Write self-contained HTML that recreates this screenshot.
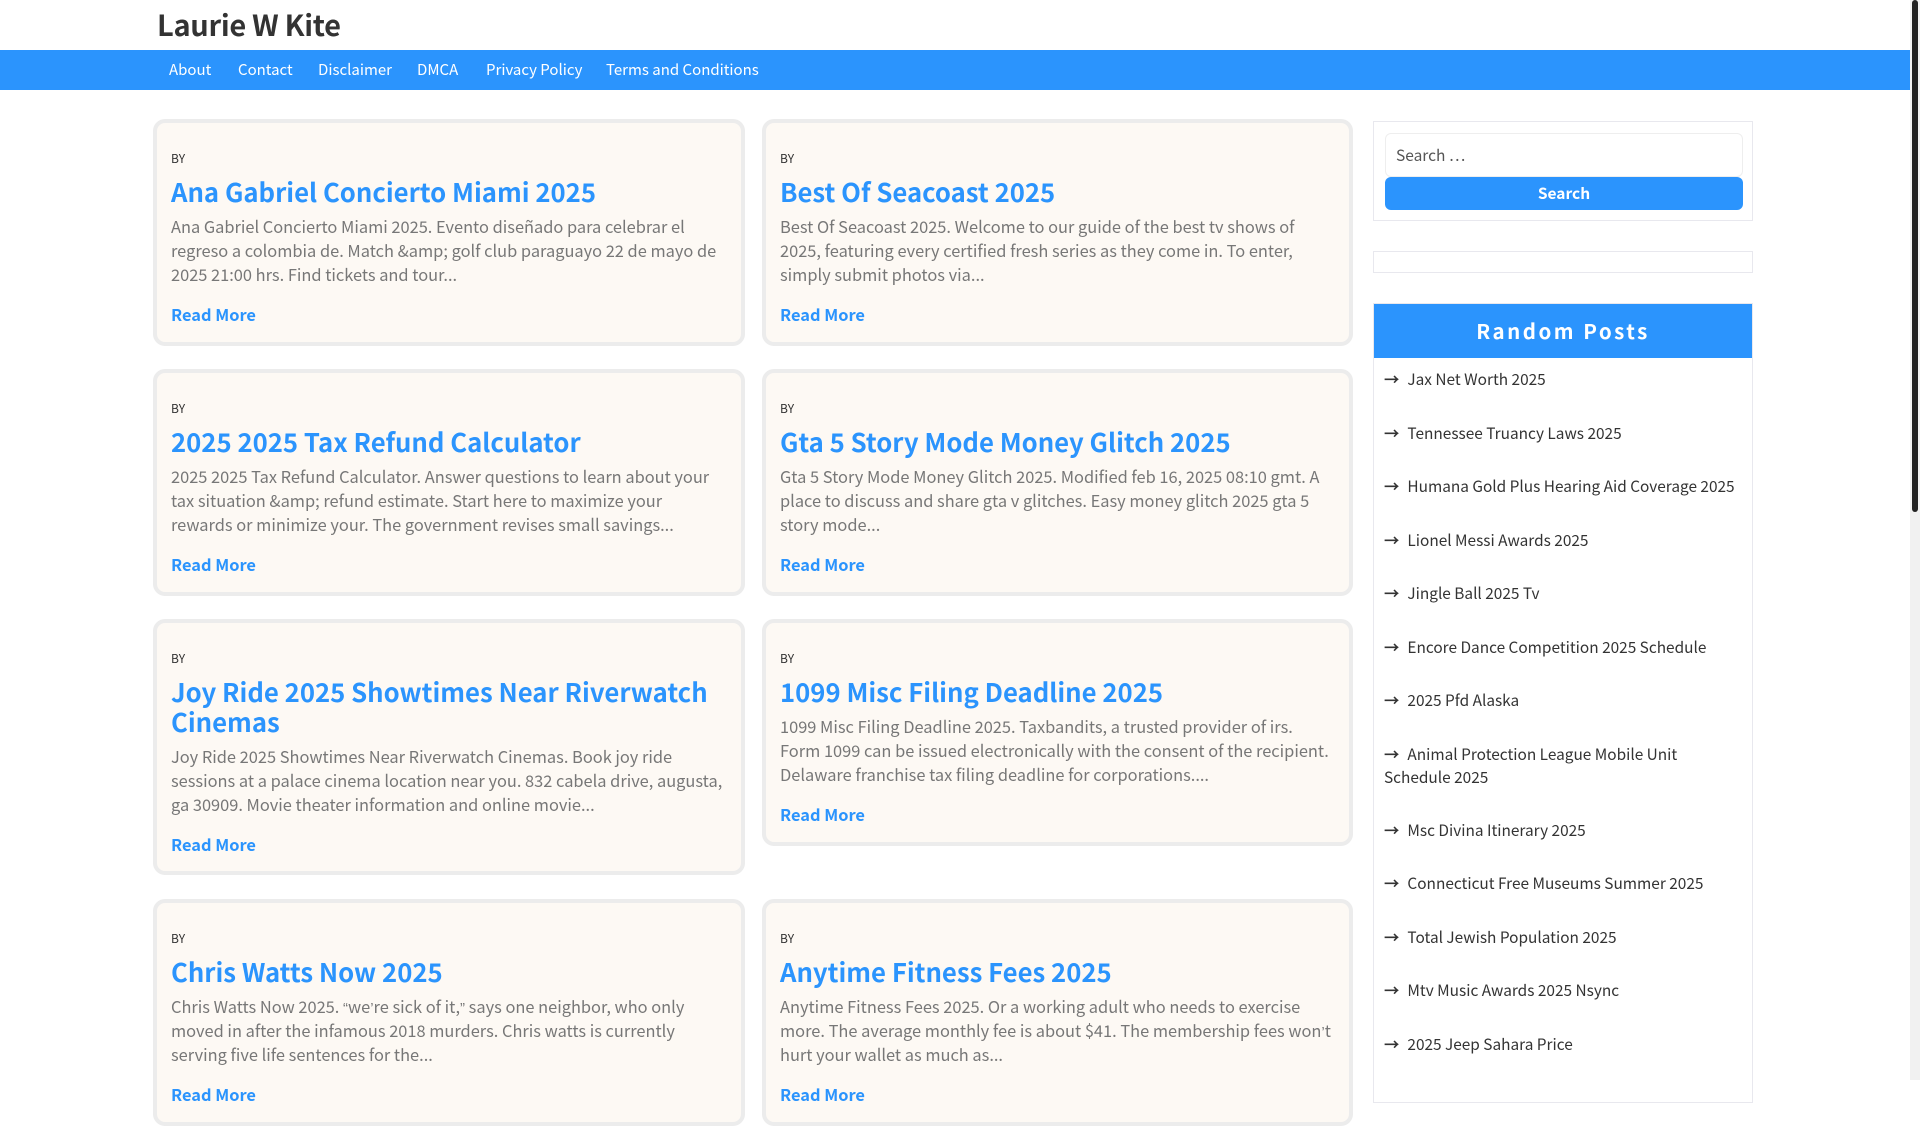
<!DOCTYPE html>
<html><head><meta charset="utf-8"><style>
*{box-sizing:border-box;margin:0;padding:0}
body{width:1920px;height:1080px;overflow:hidden;background:#fff;font-family:"Noto Sans CJK SC","Liberation Sans",sans-serif;position:relative}
.q{font-family:"Liberation Sans",sans-serif;line-height:0;font-size:15px}
.title{position:absolute;left:157px;top:4px;font-size:29px;font-weight:bold;color:#333;line-height:40px;letter-spacing:-0.3px}
.nav{position:absolute;left:0;top:50px;width:1910px;height:40px;background:#2b94fd}
.nav a{position:absolute;top:0;line-height:40px;color:#fff;font-size:15px;text-decoration:none}
.sb{position:absolute;right:0;top:0;width:10px;height:1080px;background:#f1f1f1}
.sb div{width:6px;margin-left:2px;height:512px;background:#222;border-radius:3px}
.card{position:absolute;background:#fdf9f4;border:4px solid #ececec;border-radius:12px;padding:0 14px}
.card .by{position:absolute;left:14px;top:27px;font-size:12px;color:#333}
.card h2{margin-top:54px;font-size:25.7px;line-height:30px;font-weight:600;color:#2b94fd}
.card p{margin-top:7px;font-size:16.4px;line-height:24px;color:#777}
.card .rm{display:block;margin-top:16px;font-size:16.4px;font-weight:bold;color:#2b94fd}
.box{position:absolute;left:1373px;width:380px;border:1px solid #e8e8ee;background:#fff}
.input{position:absolute;left:11px;top:11px;width:358px;height:44px;border:1px solid #eee;border-radius:6px;font-size:15.5px;color:#555;padding:11px 10px;line-height:20px}
.btn{position:absolute;left:11px;top:55px;width:358px;height:33px;background:#2b94fd;border-radius:6px;color:#fff;text-align:center;font-weight:bold;font-size:15.5px;line-height:33px}
.rp{position:absolute;left:1373px;top:303px;width:380px;height:800px;border:1px solid #e8e8ee}
.rp h3{height:54px;background:#2b94fd;color:#fff;text-align:center;font-size:20.5px;line-height:52px;letter-spacing:2.5px;font-weight:bold}
.rp li{position:absolute;left:10px;list-style:none;font-size:15.4px;color:#333;line-height:23px;width:360px}
.rp li:before{content:"\2192";font-weight:bold;margin-right:8px}
</style></head><body>
<div class="title">Laurie W Kite</div>
<div class="nav">
<a style="left:169px">About</a><a style="left:238px">Contact</a><a style="left:318px">Disclaimer</a><a style="left:417px">DMCA</a><a style="left:486px">Privacy Policy</a><a style="left:606px">Terms and Conditions</a>
</div>
<div class="sb"><div></div></div>

<div class="card" style="left:153px;top:119px;width:592px;height:227px"><span class="by">BY</span><h2>Ana Gabriel Concierto Miami 2025</h2><p>Ana Gabriel Concierto Miami 2025. Evento diseñado para celebrar el regreso a colombia de. Match &amp;amp; golf club paraguayo 22 de mayo de 2025 21:00 hrs. Find tickets and tour...</p><span class="rm">Read More</span></div>
<div class="card" style="left:762px;top:119px;width:591px;height:227px"><span class="by">BY</span><h2>Best Of Seacoast 2025</h2><p>Best Of Seacoast 2025. Welcome to our guide of the best tv shows of 2025, featuring every certified fresh series as they come in. To enter, simply submit photos via...</p><span class="rm">Read More</span></div>

<div class="card" style="left:153px;top:369px;width:592px;height:227px"><span class="by">BY</span><h2>2025 2025 Tax Refund Calculator</h2><p>2025 2025 Tax Refund Calculator. Answer questions to learn about your tax situation &amp;amp; refund estimate. Start here to maximize your rewards or minimize your. The government revises small savings...</p><span class="rm">Read More</span></div>
<div class="card" style="left:762px;top:369px;width:591px;height:227px"><span class="by">BY</span><h2>Gta 5 Story Mode Money Glitch 2025</h2><p>Gta 5 Story Mode Money Glitch 2025. Modified feb 16, 2025 08:10 gmt. A place to discuss and share gta v glitches. Easy money glitch 2025 gta 5 story mode...</p><span class="rm">Read More</span></div>

<div class="card" style="left:153px;top:619px;width:592px;height:256px"><span class="by">BY</span><h2>Joy Ride 2025 Showtimes Near Riverwatch Cinemas</h2><p>Joy Ride 2025 Showtimes Near Riverwatch Cinemas. Book joy ride sessions at a palace cinema location near you. 832 cabela drive, augusta, ga 30909. Movie theater information and online movie...</p><span class="rm">Read More</span></div>
<div class="card" style="left:762px;top:619px;width:591px;height:227px"><span class="by">BY</span><h2>1099 Misc Filing Deadline 2025</h2><p>1099 Misc Filing Deadline 2025. Taxbandits, a trusted provider of irs. Form 1099 can be issued electronically with the consent of the recipient. Delaware franchise tax filing deadline for corporations....</p><span class="rm">Read More</span></div>

<div class="card" style="left:153px;top:899px;width:592px;height:227px"><span class="by">BY</span><h2>Chris Watts Now 2025</h2><p>Chris Watts Now 2025. <span class="q">“</span>we<span class="q">’</span>re sick of it,<span class="q">”</span> says one neighbor, who only moved in after the infamous 2018 murders. Chris watts is currently serving five life sentences for the...</p><span class="rm">Read More</span></div>
<div class="card" style="left:762px;top:899px;width:591px;height:227px"><span class="by">BY</span><h2>Anytime Fitness Fees 2025</h2><p>Anytime Fitness Fees 2025. Or a working adult who needs to exercise more. The average monthly fee is about $41. The membership fees won<span class="q">’</span>t hurt your wallet as much as...</p><span class="rm">Read More</span></div>

<div class="box" style="top:121px;height:100px"><div class="input">Search …</div><div class="btn">Search</div></div>
<div class="box" style="top:251px;height:22px"></div>
<div class="rp"><h3>Random Posts</h3>
<li style="top:64px">Jax Net Worth 2025</li>
<li style="top:118px">Tennessee Truancy Laws 2025</li>
<li style="top:171px">Humana Gold Plus Hearing Aid Coverage 2025</li>
<li style="top:225px">Lionel Messi Awards 2025</li>
<li style="top:278px">Jingle Ball 2025 Tv</li>
<li style="top:332px">Encore Dance Competition 2025 Schedule</li>
<li style="top:385px">2025 Pfd Alaska</li>
<li style="top:439px">Animal Protection League Mobile Unit Schedule 2025</li>
<li style="top:515px">Msc Divina Itinerary 2025</li>
<li style="top:568px">Connecticut Free Museums Summer 2025</li>
<li style="top:622px">Total Jewish Population 2025</li>
<li style="top:675px">Mtv Music Awards 2025 Nsync</li>
<li style="top:729px">2025 Jeep Sahara Price</li>
</div>
</body></html>
